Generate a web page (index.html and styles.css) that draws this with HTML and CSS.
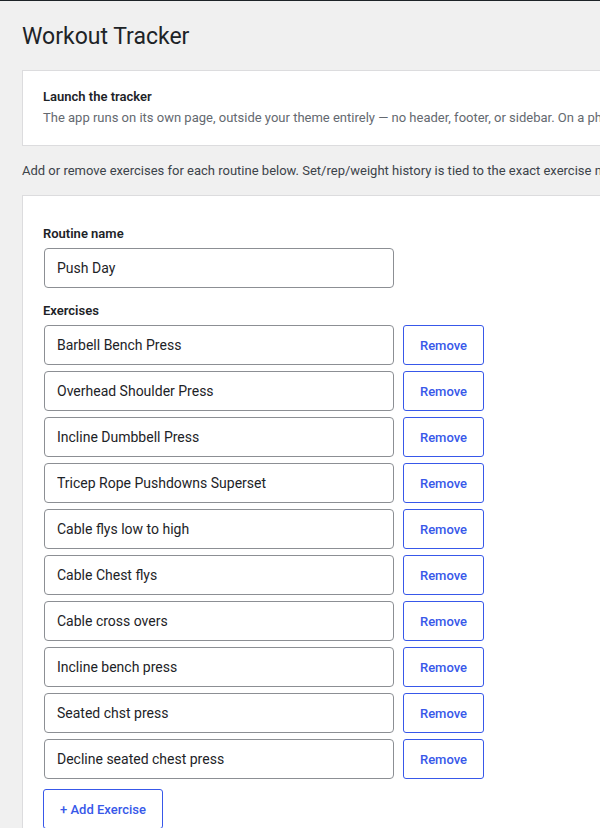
FILE: index.html
```html
<!DOCTYPE html>
<html lang="en">
<head>
    <meta charset="UTF-8">
    <meta name="viewport" content="width=device-width, initial-scale=1.0">
    <title>Workout Tracker</title>
    <link rel="stylesheet" href="styles.css">
</head>
<body>
    <div class="wrap">
        <h1>Workout Tracker</h1>

        <div class="notice">
            <h2>Launch the tracker</h2>
            <p>The app runs on its own page, outside your theme entirely — no header, footer, or sidebar. On a phone, add it to your home screen for quick access.</p>
        </div>

        <p class="intro">Add or remove exercises for each routine below. Set/rep/weight history is tied to the exact exercise name, so renaming starts a fresh history.</p>

        <div class="routine">
            <label for="routine-name">Routine name</label>
            <input type="text" id="routine-name" class="field" value="Push Day">

            <label>Exercises</label>
            <div class="exercise-list">
                <div class="exercise-row"><input type="text" class="field" value="Barbell Bench Press"><button class="btn">Remove</button></div>
                <div class="exercise-row"><input type="text" class="field" value="Overhead Shoulder Press"><button class="btn">Remove</button></div>
                <div class="exercise-row"><input type="text" class="field" value="Incline Dumbbell Press"><button class="btn">Remove</button></div>
                <div class="exercise-row"><input type="text" class="field" value="Tricep Rope Pushdowns Superset"><button class="btn">Remove</button></div>
                <div class="exercise-row"><input type="text" class="field" value="Cable flys low to high"><button class="btn">Remove</button></div>
                <div class="exercise-row"><input type="text" class="field" value="Cable Chest flys"><button class="btn">Remove</button></div>
                <div class="exercise-row"><input type="text" class="field" value="Cable cross overs"><button class="btn">Remove</button></div>
                <div class="exercise-row"><input type="text" class="field" value="Incline bench press"><button class="btn">Remove</button></div>
                <div class="exercise-row"><input type="text" class="field" value="Seated chst press"><button class="btn">Remove</button></div>
                <div class="exercise-row"><input type="text" class="field" value="Decline seated chest press"><button class="btn">Remove</button></div>
            </div>
            <button class="btn add-btn">+ Add Exercise</button>
        </div>
    </div>
</body>
</html>
```

FILE: styles.css
```css
html, body {
    margin: 0;
    overflow: hidden;
}
body {
    font-family: Roboto, "Liberation Sans", sans-serif;
    font-size: 13px;
    color: #3c434a;
    background-color: #f0f0f0;
    border-top: 1px solid #1d2327;
}
.wrap {
    width: 900px;
    padding: 0 0 0 22px;
}
h1 {
    font-size: 23px;
    font-weight: 400;
    color: #1d2327;
    margin: 0;
    padding: 21px 0 0;
    line-height: 29px;
}
.notice {
    background-color: #fff;
    border: 1px solid #dcdcde;
    margin-top: 19px;
    padding: 17px 20px 17px;
}
.notice h2 {
    font-size: 13px;
    font-weight: 600;
    color: #1d2327;
    margin: 0 0 2px;
    line-height: 18px;
}
.notice p {
    margin: 0;
    color: #646970;
    white-space: nowrap;
    line-height: 20px;
}
.intro {
    margin: 15px 0 14px;
    line-height: 20px;
    white-space: nowrap;
}
.routine {
    background-color: #fff;
    border: 1px solid #dcdcde;
    padding: 29px 20px 0;
    height: 640px;
}
label {
    display: block;
    font-weight: 600;
    color: #1d2327;
    line-height: 18px;
    margin-bottom: 5px;
}
.field {
    display: block;
    box-sizing: border-box;
    width: 350px;
    height: 40px;
    margin: 0 0 0 1px;
    padding: 0 12px;
    border: 1px solid #8c8f94;
    border-radius: 4px;
    font-family: inherit;
    font-size: 14px;
    color: #1d2327;
    background-color: #fff;
}
.routine > .field {
    margin-bottom: 14px;
}
.exercise-list {
    display: flex;
    flex-direction: column;
    gap: 6px;
    margin-top: 5px;
}
.exercise-row {
    display: flex;
    gap: 9px;
}
.btn {
    box-sizing: border-box;
    height: 40px;
    width: 81px;
    padding: 0 10px;
    background-color: #fff;
    border: 1px solid #3858e9;
    border-radius: 3px;
    color: #3858e9;
    font-family: inherit;
    font-size: 13px;
    font-weight: 500;
}
.add-btn {
    width: auto;
    padding: 0 16px;
    margin-top: 10px;
}
```
